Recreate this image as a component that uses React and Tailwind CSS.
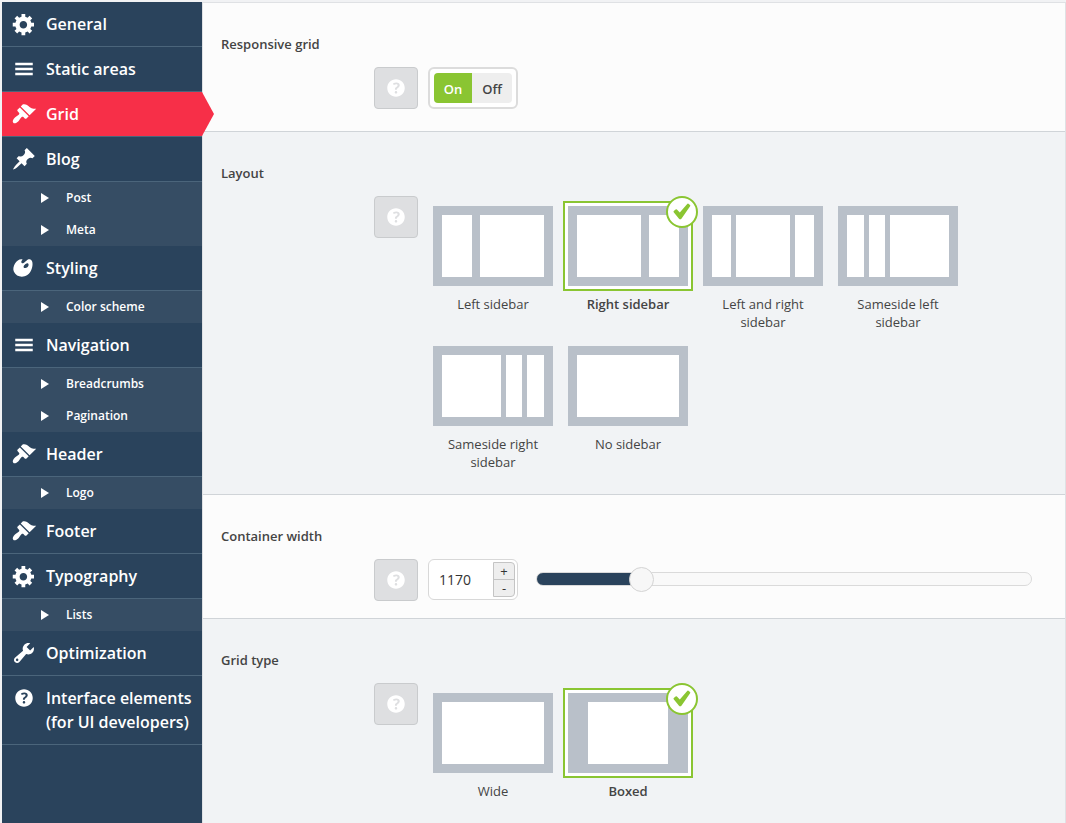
import { useState } from "react";

const ICONS = {
  cog: "M18 12h-2.18c-.17.7-.44 1.35-.81 1.93l1.54 1.54-2.1 2.1-1.54-1.54c-.58.36-1.23.63-1.91.79V19H8v-2.18c-.68-.16-1.33-.43-1.91-.79l-1.54 1.54-2.12-2.12 1.54-1.54c-.36-.58-.63-1.23-.79-1.91H1V9.03h2.17c.16-.7.44-1.35.8-1.94L2.43 5.55l2.1-2.1 1.54 1.54c.58-.37 1.24-.64 1.93-.81V2h3v2.18c.68.16 1.33.43 1.91.79l1.54-1.54 2.12 2.12-1.54 1.54c.36.59.64 1.24.8 1.94H18V12zm-8.5 1.5c1.66 0 3-1.34 3-3s-1.34-3-3-3-3 1.34-3 3 1.34 3 3 3z",
  brush:
    "M14.48 11.06L7.41 3.99l1.5-1.5c.5-.56 2.3-.47 3.51.32 1.21.8 1.43 1.28 2.91 2.1 1.18.64 2.45 1.26 4.45.85zm-.71.71L6.7 4.7 4.93 6.47c-.39.39-.39 1.02 0 1.41l1.06 1.06c.39.39.39 1.03 0 1.42-.6.6-1.43 1.11-2.21 1.69-.35.26-.7.53-1.01.84C1.43 14.23.4 16.08 1.4 17.07c.99 1 2.84-.03 4.18-1.36.31-.31.58-.66.85-1.02.57-.78 1.08-1.61 1.69-2.21.39-.39 1.02-.39 1.41 0l1.06 1.06c.39.39 1.02.39 1.41 0z",
  pin: "M10.44 3.02l1.82-1.82 6.36 6.35-1.83 1.82c-1.05-.68-2.48-.57-3.41.36l-.75.75c-.92.93-1.04 2.35-.35 3.41l-1.83 1.82-2.41-2.41-2.8 2.79c-.42.42-3.38 2.71-3.8 2.29s1.86-3.39 2.28-3.81l2.79-2.79L4.1 9.36l1.83-1.82c1.05.69 2.48.57 3.4-.36l.75-.75c.93-.92 1.05-2.35.36-3.41z",
  art: "M8.55 3.06c1.01.34-1.95 2.01-.1 3.13 1.04.63 3.31-2.22 4.45-2.86.97-.54 2.67-.65 3.53 1.23 1.09 2.38.14 8.57-3.79 11.06-3.97 2.5-8.97 1.23-10.7-2.66-2.01-4.53 3.12-11.09 6.61-9.9zm1.21 6.45c.73 1.64 4.7-.5 3.79-2.8-.59-1.49-4.48 1.25-3.79 2.8z",
  tools:
    "M16.68 9.77c-1.34 1.34-3.3 1.67-4.95.99l-5.41 6.52c-.99.99-2.59.99-3.58 0s-.99-2.59 0-3.57l6.52-5.42c-.68-1.65-.35-3.61.99-4.95 1.28-1.28 3.12-1.62 4.72-1.06l-2.89 2.89 2.82 2.82 2.86-2.87c.53 1.58.18 3.39-1.08 4.65zM3.81 16.21c.4.39 1.04.39 1.43 0 .4-.4.4-1.04 0-1.43-.39-.4-1.03-.4-1.43 0-.39.39-.39 1.03 0 1.43z",
  menu: "M17 7V5H3v2h14zm0 4V9H3v2h14zm0 4v-2H3v2h14z",
  help: "M17 10c0-3.87-3.14-7-7-7-3.87 0-7 3.13-7 7s3.13 7 7 7c3.86 0 7-3.13 7-7zm-6.3 1.48H9.14v-.43c0-.38.08-.7.24-.98s.46-.57.88-.89c.41-.29.68-.53.81-.71.14-.18.2-.39.2-.62 0-.25-.09-.44-.28-.58-.19-.13-.45-.19-.79-.19-.58 0-1.25.19-2 .57l-.64-1.28c.87-.49 1.8-.74 2.77-.74.81 0 1.45.2 1.92.58.48.39.71.91.71 1.55 0 .43-.09.8-.29 1.11-.19.32-.57.67-1.11 1.06-.38.28-.61.49-.71.63-.1.15-.15.34-.15.57v.35zm-1.47 2.74c-.18-.17-.27-.42-.27-.73 0-.33.08-.58.26-.75s.43-.25.77-.25c.32 0 .57.09.75.26s.27.42.27.74c0 .3-.09.55-.27.72-.18.18-.43.27-.75.27-.33 0-.58-.09-.76-.26z",
};

const NAV = [
  { label: "General", icon: "cog" },
  { label: "Static areas", icon: "menu" },
  { label: "Grid", icon: "brush", active: true },
  { label: "Blog", icon: "pin", children: ["Post", "Meta"] },
  { label: "Styling", icon: "art", children: ["Color scheme"] },
  { label: "Navigation", icon: "menu", children: ["Breadcrumbs", "Pagination"] },
  { label: "Header", icon: "brush", children: ["Logo"] },
  { label: "Footer", icon: "brush" },
  { label: "Typography", icon: "cog", children: ["Lists"] },
  { label: "Optimization", icon: "tools" },
  { label: "Interface elements (for UI developers)", icon: "help" },
];

const LAYOUTS = [
  { label: "Left sidebar", gap: "gap-2", columns: ["w-[30px]", "flex-1"] },
  { label: "Right sidebar", gap: "gap-2", columns: ["flex-1", "w-[30px]"] },
  { label: "Left and right sidebar", gap: "gap-[5px]", columns: ["w-[19px]", "flex-1", "w-[19px]"] },
  { label: "Sameside left sidebar", gap: "gap-[5px]", columns: ["w-[17px]", "w-4", "flex-1"] },
  { label: "Sameside right sidebar", gap: "gap-[5px]", columns: ["flex-1", "w-4", "w-[17px]"] },
  { label: "No sidebar", gap: "gap-0", columns: ["flex-1"] },
];

const GRID_TYPES = [
  { label: "Wide", gap: "gap-0", columns: ["flex-1"] },
  { label: "Boxed", gap: "gap-0", columns: ["w-20"] },
];

function Icon({ name }) {
  return (
    <svg viewBox="-0.4 -0.4 20.8 20.8" className="size-[26px] shrink-0 fill-current" aria-hidden="true">
      <path d={ICONS[name]} />
    </svg>
  );
}

function NavItem({ item }) {
  return (
    <li>
      <a
        href="#"
        aria-current={item.active ? "page" : undefined}
        className={`relative flex gap-[9px] border-b border-[#4b657b] py-2.5 pl-[9px] text-base leading-6 font-semibold text-white ${
          item.active ? "bg-[#f72f48]" : ""
        }`}
      >
        <span className="flex h-6 shrink-0 items-center">
          <Icon name={item.icon} />
        </span>
        <span>{item.label}</span>
        {item.active && (
          <svg viewBox="0 0 12 44" className="absolute top-0 left-full h-11 w-3 fill-[#f72f48]" aria-hidden="true">
            <path d="M0 0L12 22L0 44z" />
          </svg>
        )}
      </a>
      {item.children && (
        <ul className="bg-[#364d64]">
          {item.children.map((child) => (
            <li key={child}>
              <a href="#" className="flex h-8 items-center gap-[17px] pl-[39px] text-xs font-semibold text-white">
                <svg viewBox="0 0 8 10" className="h-2.5 w-2 fill-white" aria-hidden="true">
                  <path d="M0 0L8 5L0 10z" />
                </svg>
                <span>{child}</span>
              </a>
            </li>
          ))}
        </ul>
      )}
    </li>
  );
}

function Section({ title, className, children }) {
  return (
    <section className={`border-[#d0d4d8] pt-8 pr-[33px] pl-[18px] ${className}`}>
      <h2 className="text-[13px] leading-[18px] font-semibold text-[#444]">{title}</h2>
      <div className="mt-3.5 flex items-start gap-2.5 pl-[153px]">
        <button
          type="button"
          aria-label={`Help: ${title}`}
          className="flex h-[42px] w-11 shrink-0 items-center justify-center rounded border border-[#c9cbcd] bg-[#dedfe1] text-white"
        >
          <Icon name="help" />
        </button>
        {children}
      </div>
    </section>
  );
}

function Tiles({ name, options, value, onChange }) {
  return (
    <div className="flex flex-wrap gap-x-[5px] gap-y-2.5 pt-[5px]">
      {options.map((option) => {
        const selected = option.label === value;
        return (
          <label key={option.label} className="relative flex w-[130px] cursor-pointer flex-col gap-1">
            <input
              type="radio"
              name={name}
              checked={selected}
              onChange={() => onChange(option.label)}
              className="sr-only"
            />
            <span
              className={`block border-2 p-[3px] ${selected ? "border-[#8ac532] bg-white" : "border-transparent"}`}
            >
              <span className={`flex h-20 justify-center bg-[#b9c0c9] p-[9px] ${option.gap}`}>
                {option.columns.map((width, i) => (
                  <span key={i} className={`bg-white ${width}`} />
                ))}
              </span>
            </span>
            <span
              className={`px-4 text-center text-[13px] leading-[18px] text-[#444] ${selected ? "font-semibold" : ""}`}
            >
              {option.label}
            </span>
            {selected && (
              <span className="absolute -top-[5px] -right-[5px] flex size-8 items-center justify-center rounded-full border-2 border-[#8ac532] bg-white">
                <svg viewBox="0 0 18 18" className="size-[18px] fill-[#8ac532]" aria-hidden="true">
                  <path d="M.7 9.2Q.2 8.700 .8 8.100L2.600 6.500Q3.300 6 3.900 6.600L6.800 9.500L14.200.9Q14.800.3 15.500.8L17 2Q17.600 2.600 17.100 3.300L8.600 15.400Q7.300 17 6 15.700z" />
                </svg>
              </span>
            )}
          </label>
        );
      })}
    </div>
  );
}

const MIN_WIDTH = 900;
const MAX_WIDTH = 2270;

export default function App() {
  const [responsive, setResponsive] = useState("On");
  const [layout, setLayout] = useState("Right sidebar");
  const [gridType, setGridType] = useState("Boxed");
  const [width, setWidth] = useState(1170);
  const filled = ((width - MIN_WIDTH) / (MAX_WIDTH - MIN_WIDTH)) * 100;

  return (
    <div className="flex min-h-screen bg-[#f1f2f4] pt-0.5 pl-0.5 font-['Open_Sans',sans-serif]">
      <nav className="w-[200px] shrink-0 bg-[#2a435c]">
        <ul>
          {NAV.map((item) => (
            <NavItem key={item.label} item={item} />
          ))}
        </ul>
      </nav>

      <main className="min-w-0 flex-1 border-t border-r border-l border-[#dfe1e4] bg-[#f1f3f5]">
        <Section title="Responsive grid" className="border-b bg-[#fcfcfc] pb-[22px]">
          <div className="flex rounded-md border-2 border-[#dcdcdc] bg-white p-1">
            {["On", "Off"].map((option) => (
              <label
                key={option}
                className={`flex h-[30px] cursor-pointer items-center justify-center pt-px text-[13px] leading-5 font-semibold first:w-[38px] first:rounded-l-sm last:w-10 last:rounded-r-sm ${
                  responsive === option ? "bg-[#8ac532] text-white" : "bg-[#eee] text-[#444]"
                }`}
              >
                <input
                  type="radio"
                  name="responsive"
                  checked={responsive === option}
                  onChange={() => setResponsive(option)}
                  className="sr-only"
                />
                {option}
              </label>
            ))}
          </div>
        </Section>

        <Section title="Layout" className="border-b pb-[23px]">
          <Tiles name="layout" options={LAYOUTS} value={layout} onChange={setLayout} />
        </Section>

        <Section title="Container width" className="border-b bg-[#fcfcfc] pb-[17px]">
          <div className="flex h-[41px] w-[90px] shrink-0 rounded-md border border-[#d8d8d8] bg-white py-0.5 pr-0.5 pl-2.5">
            <input
              type="number"
              aria-label="Container width"
              value={width}
              onChange={(e) => setWidth(Number(e.target.value))}
              className="min-w-0 flex-1 appearance-none bg-transparent text-sm text-[#333] outline-none [-moz-appearance:textfield] [&::-webkit-inner-spin-button]:appearance-none"
            />
            <div className="flex w-[22px] flex-col divide-y divide-[#c4c4c4] rounded-r border border-[#c4c4c4] bg-[#eee] text-[13px] leading-none text-[#333]">
              <button type="button" aria-label="Increase" className="flex-1" onClick={() => setWidth(width + 1)}>
                +
              </button>
              <button type="button" aria-label="Decrease" className="flex-1" onClick={() => setWidth(width - 1)}>
                -
              </button>
            </div>
          </div>
          <div className="flex h-10 min-w-0 flex-1 items-center pl-2">
            <input
              type="range"
              aria-label="Container width slider"
              min={MIN_WIDTH}
              max={MAX_WIDTH}
              value={width}
              onChange={(e) => setWidth(Number(e.target.value))}
              style={{
                backgroundImage: `linear-gradient(to right, #2a435c ${filled}%, #f9f9f9 ${filled}%)`,
              }}
              className="h-3.5 w-full cursor-pointer appearance-none rounded-full border border-[#dadada] bg-origin-border [&::-webkit-slider-thumb]:size-[25px] [&::-webkit-slider-thumb]:appearance-none [&::-webkit-slider-thumb]:rounded-full [&::-webkit-slider-thumb]:border [&::-webkit-slider-thumb]:border-[#d4d4d4] [&::-webkit-slider-thumb]:bg-[#f7f7f7]"
            />
          </div>
        </Section>

        <Section title="Grid type" className="pb-[17px]">
          <Tiles name="grid-type" options={GRID_TYPES} value={gridType} onChange={setGridType} />
        </Section>
      </main>
    </div>
  );
}
